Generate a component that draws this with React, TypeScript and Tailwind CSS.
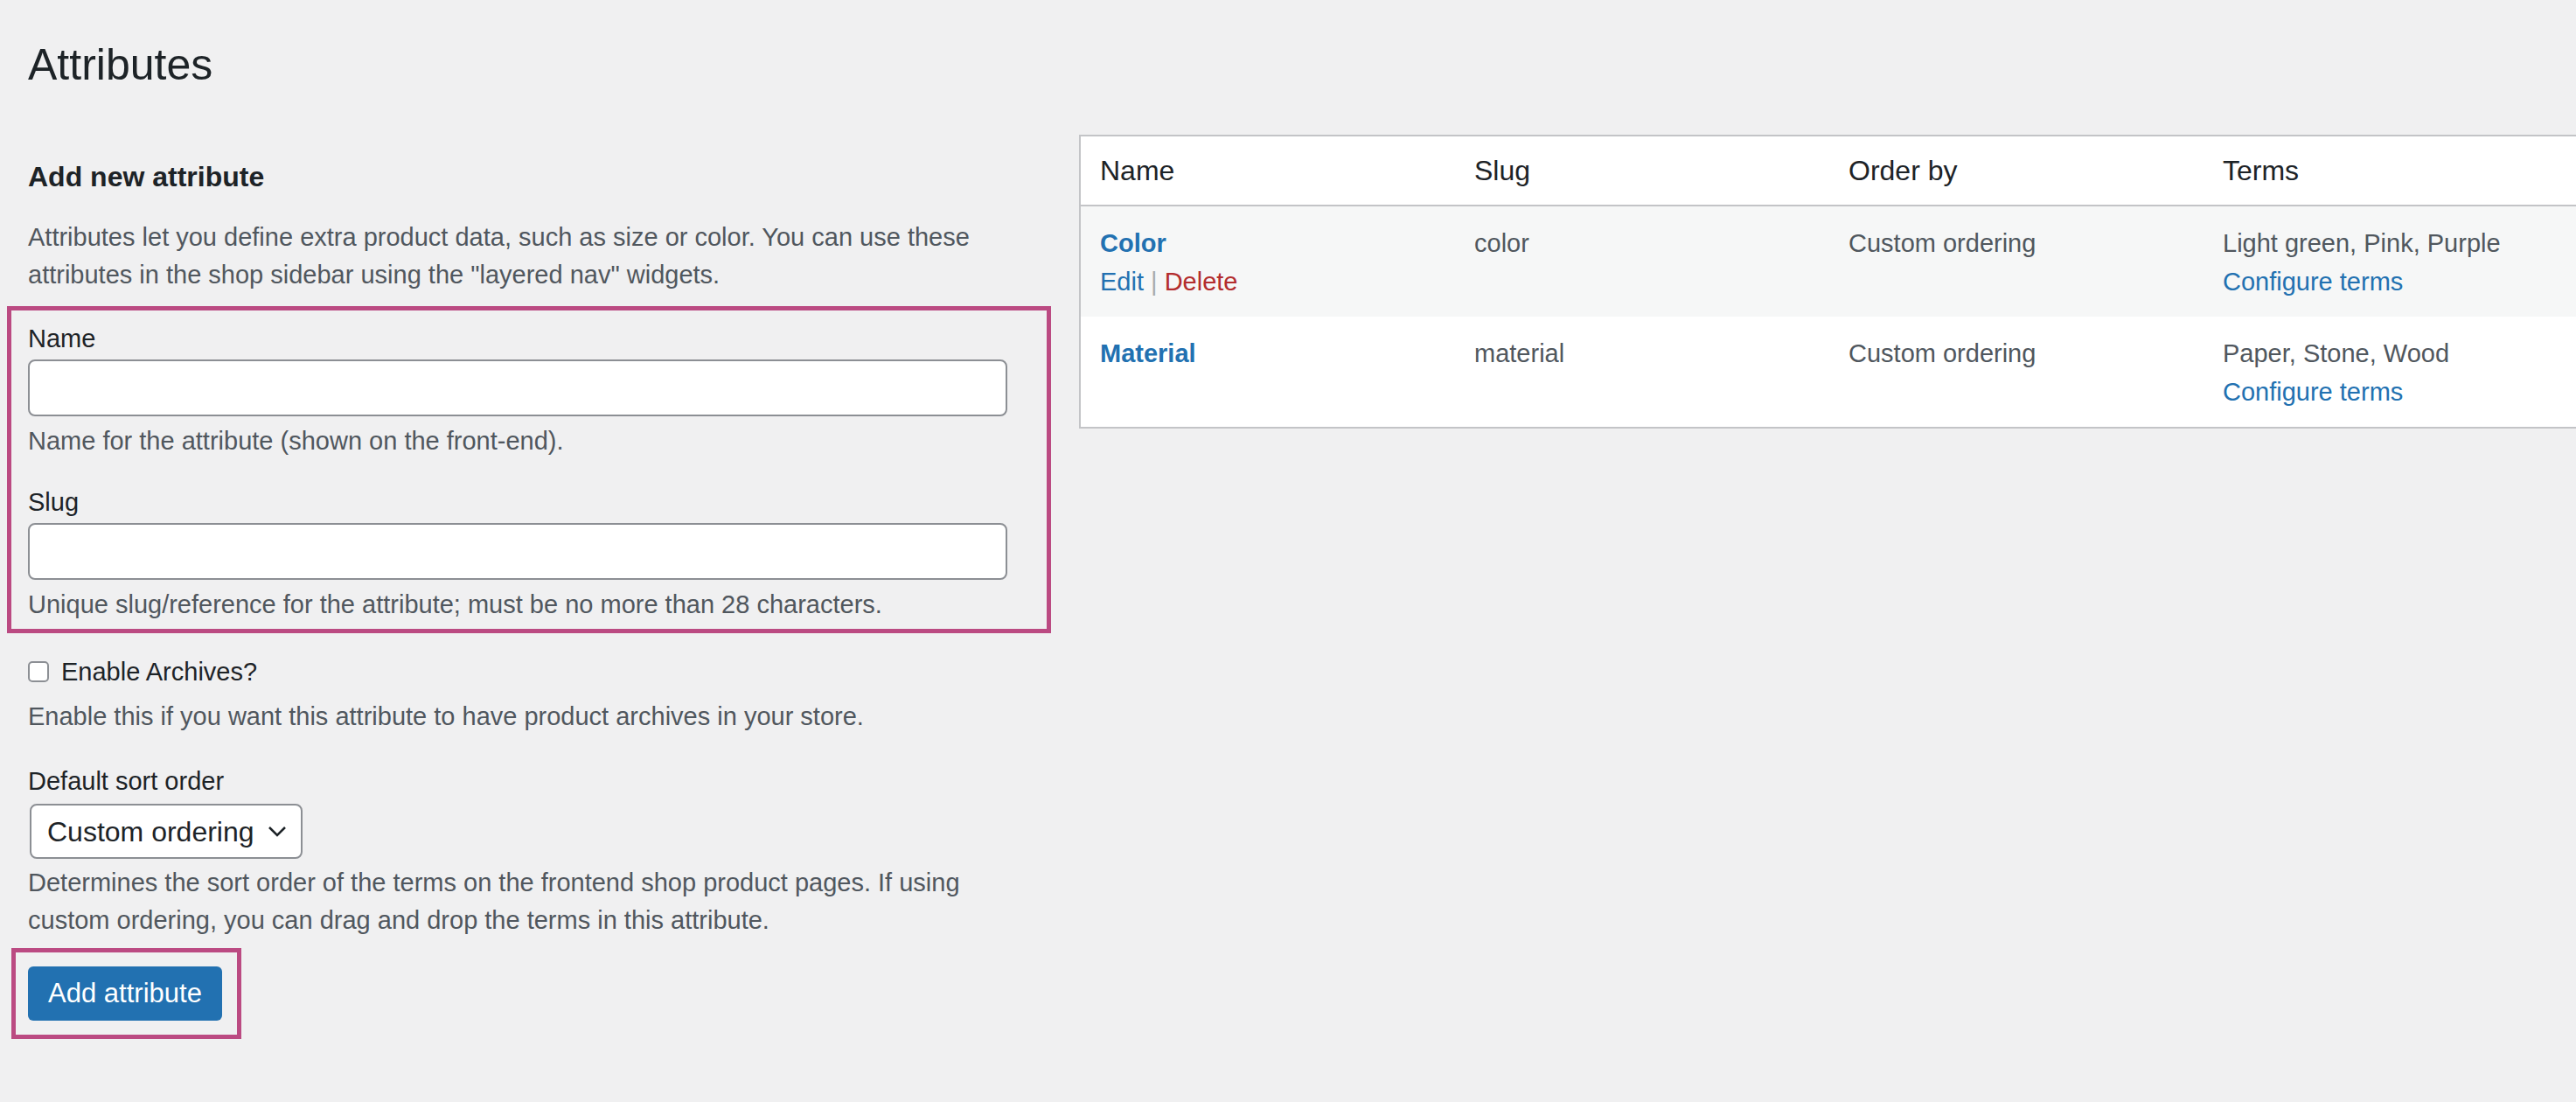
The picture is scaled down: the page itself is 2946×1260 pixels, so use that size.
const font = { fontFamily: '"Liberation Sans", Arial, sans-serif' };

function Field({ label, help }: { label: string; help: string }) {
  return (
    <div className="flex flex-col">
      <label className="text-[29px] leading-[40px] text-[#1d2327]">{label}</label>
      <input className="mt-[4px] h-[65px] w-[1120px] rounded-[8px] border-2 border-[#8c8f94] bg-white" />
      <p className="mt-[8px] text-[29px] leading-[40px] text-[#50575e]">{help}</p>
    </div>
  );
}

const rows = [
  { name: "Color", slug: "color", terms: "Light green, Pink, Purple", actions: true, tone: "bg-[#f6f7f7]" },
  { name: "Material", slug: "material", terms: "Paper, Stone, Wood", actions: false, tone: "bg-white" },
];

export default function App() {
  return (
    <div style={font} className="h-[1260px] w-[2946px] overflow-hidden bg-[#f0f0f1]">
      <h1 className="pl-[32px] pt-[44px] text-[50px] leading-[60px] text-[#1d2327]">Attributes</h1>
      <div className="mt-[50px] flex items-start">
        <div className="flex w-[1228px] flex-col pl-[8px] pt-[28px]">
          <h2 className="pl-[24px] text-[32px] font-semibold leading-[40px] text-[#1d2327]">Add new attribute</h2>
          <p className="mt-[28px] w-[1150px] pl-[24px] text-[29px] leading-[43px] text-[#50575e]">
            Attributes let you define extra product data, such as size or color. You can use these attributes in the shop sidebar using the "layered nav" widgets.
          </p>
          <div className="mt-[14px] flex w-[1194px] flex-col gap-[30px] border-[5px] border-[#bb4a82] pb-[8px] pl-[19px] pt-[12px]">
            <Field label="Name" help="Name for the attribute (shown on the front-end)." />
            <Field label="Slug" help="Unique slug/reference for the attribute; must be no more than 28 characters." />
          </div>
          <label className="mt-[24px] flex items-center gap-[14px] pl-[24px] text-[29px] leading-[40px] text-[#1d2327]">
            <span className="h-[24px] w-[24px] rounded-[5px] border-2 border-[#8c8f94] bg-white" />
            Enable Archives?
          </label>
          <p className="mt-[10px] pl-[24px] text-[29px] leading-[43px] text-[#50575e]">
            Enable this if you want this attribute to have product archives in your store.
          </p>
          <label className="mt-[32px] pl-[24px] text-[29px] leading-[40px] text-[#1d2327]">Default sort order</label>
          <div className="ml-[26px] mt-[6px] flex h-[63px] w-[312px] items-center justify-between rounded-[8px] border-2 border-[#8c8f94] bg-white pl-[18px] pr-[16px] text-[32px] text-[#1d2327]">
            Custom ordering
            <svg width="22" height="14" viewBox="0 0 22 14" fill="none" stroke="#1d2327" strokeWidth="2.5">
              <path d="M2 2l9 9 9-9" />
            </svg>
          </div>
          <p className="mt-[6px] w-[1160px] pl-[24px] text-[29px] leading-[43px] text-[#50575e]">
            Determines the sort order of the terms on the frontend shop product pages. If using custom ordering, you can drag and drop the terms in this attribute.
          </p>
          <div className="ml-[5px] mt-[10px] w-[263px] border-[5px] border-[#bb4a82] px-[14px] py-[16px]">
            <button className="h-[62px] w-[222px] rounded-[6px] bg-[#2271b1] text-[31px] text-white">Add attribute</button>
          </div>
        </div>
        <div className="ml-[32px] w-[1760px] shrink-0 border-2 border-[#c3c4c7] bg-white">
          <div className="grid h-[80px] grid-cols-[428px_428px_428px_1fr] items-center border-b-2 border-[#c3c4c7] pl-[22px] text-[32px] text-[#1d2327]">
            <span>Name</span>
            <span>Slug</span>
            <span>Order by</span>
            <span>Terms</span>
          </div>
          {rows.map((r) => (
            <div key={r.name} className={`grid h-[126px] grid-cols-[428px_428px_428px_1fr] pl-[22px] pt-[20px] text-[29px] leading-[44px] text-[#50575e] ${r.tone}`}>
              <div className="flex flex-col">
                <span className="font-bold text-[#2271b1]">{r.name}</span>
                {r.actions ? (
                  <span>
                    <span className="text-[#2271b1]">Edit</span> <span className="text-[#a7aaad]">|</span>{" "}
                    <span className="text-[#b32d2e]">Delete</span>
                  </span>
                ) : null}
              </div>
              <span>{r.slug}</span>
              <span>Custom ordering</span>
              <div className="flex flex-col">
                <span>{r.terms}</span>
                <span className="text-[#2271b1]">Configure terms</span>
              </div>
            </div>
          ))}
        </div>
      </div>
    </div>
  );
}
